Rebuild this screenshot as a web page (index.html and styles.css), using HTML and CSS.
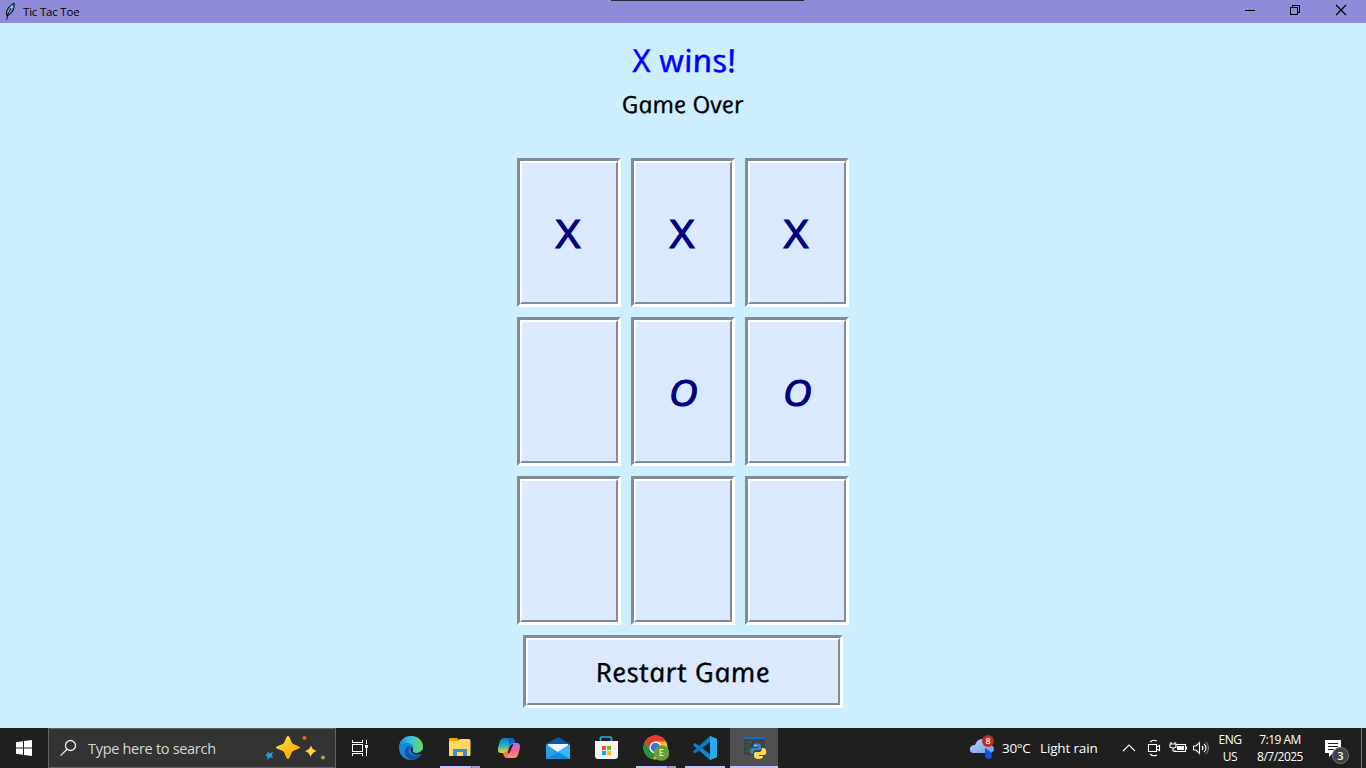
FILE: index.html
```html
<!DOCTYPE html>
<html lang="en">
<head>
<meta charset="utf-8">
<title>Tic Tac Toe</title>
<link rel="stylesheet" href="styles.css">
</head>
<body>
<header class="titlebar">
  <svg class="feather" width="12" height="18" viewBox="0 0 12 18"><path d="M3 14C1 8 5 4 10 1C11 7 8 12 3 14Z" fill="#4777ad" stroke="#080a12"/><path d="M4 11L8.500 4" stroke="#b4d8ff" stroke-width="1.800"/><path d="M2.700 17.500L4 12L7 6" fill="none" stroke="#080a12"/></svg>
  <h1 class="window-title">Tic Tac Toe</h1>
  <i class="snap-line"></i>
  <svg class="window-controls" width="138" height="23" viewBox="0 0 138 23" fill="none" stroke="#000" shape-rendering="crispEdges"><path d="M17 10.5H27M62.5 7.5H69.5V14.5H62.5ZM64.5 7V5.5H71.5V12.5H70"/><path d="M108 5L118 15M118 5L108 15" shape-rendering="auto" stroke-width="1.2"/></svg>
</header>
<main class="game">
  <p class="status"><span class="comic win-text">X wins!</span></p>
  <p class="substatus"><span class="comic over-text">Game Over</span></p>
  <div class="board">
    <button class="cell"><span class="mark-x">X</span></button><button class="cell"><span class="mark-x">X</span></button><button class="cell"><span class="mark-x">X</span></button>
    <button class="cell"></button><button class="cell"><span class="mark-o">O</span></button><button class="cell"><span class="mark-o">O</span></button>
    <button class="cell"></button><button class="cell"></button><button class="cell"></button>
  </div>
  <button class="cell restart"><span class="comic restart-text">Restart Game</span></button>
</main>
<footer class="taskbar">
  <div class="start"><svg width="16" height="16" viewBox="0 0 16 16" fill="#fff"><path d="M0 2.2L7 1.2V7.5H0ZM8 1L16 0V7.5H8ZM0 8.5H7V14.8L0 13.8ZM8 8.5H16V16L8 15Z"/></svg></div>
  <div class="search">
    <svg width="18" height="18" viewBox="0 0 18 18" fill="none" stroke="#ededed" stroke-width="1.3"><circle cx="10.500" cy="6.500" r="5"/><path d="M7 10.2L.6 16.6"/></svg>
    <span class="search-text">Type here to search</span>
    <svg class="sparkles" width="64" height="26" viewBox="0 0 64 26"><defs><linearGradient id="gold" x2="1" y2="1"><stop stop-color="#ffe45a"/><stop offset=".6" stop-color="#fdb813"/><stop offset="1" stop-color="#e89b19"/></linearGradient></defs><path d="M24 1C26 1 27 7 28.5 8.500C30 10 36 11 36 12.500C36 14 30 15 28.500 16.500C27 18 26 24 24 24C22 24 21 18 19.500 16.500C18 15 12 14 12 12.500C12 11 18 10 19.500 8.500C21 7 22 1 24 1Z" fill="url(#gold)"/><path d="M47 10.5Q48 14.5 52.5 16Q48 17.5 46.5 22Q45.5 17.5 41 16Q46 14.5 47 10.5Z" fill="#ffd33e"/><path d="M3 16.500L5.500 18.300L9 17L7.800 20L9 23L6 22.300L3.500 25L3.500 21.600L.5 20L3.300 19.200Z" fill="#1ba4ec"/><circle cx="40.5" cy="3" r="2" fill="#e86227"/><circle cx="59" cy="22.5" r="2" fill="#83bd3d"/></svg>
  </div>
  <div class="task-view"><svg width="18" height="18" viewBox="0 0 18 18" fill="none" stroke="#fff" shape-rendering="crispEdges"><path d="M1.5 1V3.5H11.5V1M1.5 5.5H11.5V12.5H1.5ZM1.5 17V14.5H11.5V17M15.5 1V5M15.5 9V17"/><path d="M14 5.5H17V8.5H14Z" fill="#fff" stroke="none"/></svg></div>
  <nav class="apps">
    <div class="app"><svg width="26" height="26" viewBox="0 0 26 26"><defs><linearGradient id="edgeTop"><stop stop-color="#168ed7"/><stop offset=".45" stop-color="#35c2dd"/><stop offset="1" stop-color="#69df55"/></linearGradient></defs><circle cx="13" cy="13" r="12" fill="#1687dc"/><path d="M1.2 11C2 4 8 1 13 1C20 1 25 6 25 11.5C25 16 22 18 18.5 18C15 18 14 16.5 15 15C17 11 13 8 9 8C5 8 2.5 9 1.2 11Z" fill="url(#edgeTop)"/><path d="M15 15C14 16.500 15.500 18 18.500 18Q22 18 24.500 14.500L26 19L23 19Q17 21 14 18Q12 16 13 12Q15 13 15 15Z" fill="#1f1f20"/><path d="M8 13C5 18 8 24 14 25C18 25 21 23 23 19.500C17 22 12 20 11 17C10 15 11 13 13 12C11 10.500 9 11 8 13Z" fill="#1455a6"/></svg></div>
    <div class="app open stacked"><svg width="24" height="22" viewBox="0 0 24 22"><path d="M1 2Q1 1 2 1H9L11 3H22V18H1Z" fill="#e8a900"/><path d="M1 4H10L12 2H21Q22.5 2 22.5 4V18Q22.5 19 21 19H1Z" fill="#ffd763"/><path d="M5 19V12H19V19H15V15H9V19Z" fill="#3c8ed6"/></svg></div>
    <div class="app"><svg width="24" height="22" viewBox="0 0 24 22"><defs><linearGradient id="copA" x2="0" y2="1"><stop stop-color="#0a7acc"/><stop offset=".5" stop-color="#24b5be"/><stop offset="1" stop-color="#ffd12b"/></linearGradient><linearGradient id="copB" x2="0" y2="1"><stop stop-color="#b56bee"/><stop offset=".5" stop-color="#f36399"/><stop offset="1" stop-color="#ff9a55"/></linearGradient></defs><path d="M7 1H15Q17 1 18 5L18.5 7H15Q13 7 12 10L10.5 14Q9.5 16 7 16H4Q0 16 1.2 10L3 4Q4 1 7 1Z" fill="url(#copA)"/><path d="M13 1H15Q17 1 18 5L18.5 7H15Q13 7 12.5 8L11.5 4Q11 1 9 1Z" fill="#1760cc"/><path d="M17 6H20Q24 6 22.7 12L21 18Q20 21 17 21H10Q7 21 6 16H7Q10 16 11 13L13 8Q14 6 17 6Z" fill="url(#copB)"/><path d="M6 16H7Q10 16 11 13L12 10L11 18Q10.5 21 9 20Q7 19 6 16Z" fill="#ff7550"/><path d="M16.500 7L13 15Q12.300 16.500 10.500 16.500L13 9Q14 7 16.500 7Z" fill="#202021"/></svg></div>
    <div class="app"><svg width="24" height="24" viewBox="0 0 24 24"><path d="M0 8L12 1L24 8V16H0Z" fill="#075ba8"/><path d="M2 8H22V14L12 20L2 14Z" fill="#f2f4f8"/><path d="M0 8L13 17L0 23Z" fill="#2b9fe5"/><path d="M24 8L0 23H24Z" fill="#35b9f2"/><path d="M12 16L24 23H0Z" fill="#168bdc"/></svg></div>
    <div class="app store"><svg width="24" height="24" viewBox="0 0 24 24"><path d="M6.5 6V2Q6.5 1 7.5 1H16.5Q17.5 1 17.5 2V6" fill="none" stroke="#26addc" stroke-width="1.7"/><path d="M1 5H24V20Q24 23 21 23H4Q1 23 1 20Z" fill="#f4f4f4"/><path d="M8 10H12V14H8Z" fill="#f15125"/><path d="M13 10H17V14H13Z" fill="#80bb03"/><path d="M8 15H12V19H8Z" fill="#05a6f0"/><path d="M13 15H17V19H13Z" fill="#ffb900"/></svg></div>
    <div class="app open stacked"><svg width="26" height="26" viewBox="0 0 26 26"><circle cx="12.5" cy="12.5" r="12" fill="#fbc116"/><path d="M2 6.5A12 12 0 0 1 23 6.5H12.5L7.2 15.5Z" fill="#e33b2e"/><path d="M2 6.5L7.2 15.5L13 18.5L10 24.2A12 12 0 0 1 2 6.5Z" fill="#229342"/><circle cx="12.5" cy="12.5" r="6" fill="#fff"/><circle cx="12.5" cy="12.5" r="4.7" fill="#3577e5"/><circle cx="18.5" cy="18" r="7.8" fill="#689f38"/><text x="18.5" y="21.2" class="avatar-letter">E</text></svg></div>
    <div class="app open"><svg width="26" height="26" viewBox="0 0 26 26"><path d="M18 1L25 4V22L18 25L1 10L3 8L18 19Z" fill="#1684cd"/><path d="M18 1V7L3 18.5L1 16.5Z" fill="#087cc3"/><path d="M18 1L25 4V22L18 25Z" fill="#2aa9ee"/></svg></div>
    <div class="app open active"><svg width="26" height="26" viewBox="0 0 26 26"><path d="M2 2H23V20H2Z" fill="#3d4449"/><path d="M2 2H23V4H2Z" fill="#0873c9"/><path d="M4 7H10M4 10H8M4 13H9M4 16H8" stroke="#38613c" stroke-width="1.5"/><path d="M12 9Q16 7 19 10V15H13Q11 16 11 19H9Q7 14 10 13H16V12H11Q11 10 12 9Z" fill="#3b83bd"/><path d="M20 13H22Q25 14 24 19Q23 20 21 20H17V21H21Q21 24 17 24Q12 24 12 21V19Q12 17 14 17H18Q20 16 20 13Z" fill="#ffdc54"/><circle cx="13.5" cy="10.5" r=".8" fill="#fff"/><circle cx="19.5" cy="22" r=".7" fill="#fff"/></svg></div>
  </nav>
  <div class="weather">
    <svg width="26" height="26" viewBox="0 0 26 26"><defs><linearGradient id="cloud" x2="1" y2="1"><stop stop-color="#bdd9fe"/><stop offset="1" stop-color="#659bec"/></linearGradient></defs><path d="M5 18Q0 18 1 13Q2 10 6 10Q8 4 13 4Q18 4 20 10Q25 10 25 14Q25 18 20 18Z" fill="url(#cloud)"/><path d="M16 13Q23 17 23 21Q23 24 19.5 24Q16 24 16 20Z" fill="#174fe0"/><circle cx="19" cy="6" r="6" fill="#c42b1c"/><text x="19" y="9.3" class="badge-number">8</text></svg>
    <span class="temperature">30°C</span><span class="condition">Light rain</span>
  </div>
  <svg class="tray" width="88" height="24" viewBox="0 0 88 24" fill="none" stroke="#fff" stroke-width="1.1">
    <path d="M1 15L7 9L13 15"/>
    <path d="M28 6Q31 3 35 5M28 18Q31 21 35 19M26.5 8.5H34.5V15.5H26.5ZM34.5 11L37.5 9.5V14.5L34.5 13"/>
    <path d="M54 8.5H63.5V15.5H52M64.5 10.5V13.5"/><path d="M55 10H62V14H55Z" fill="#fff" stroke="none"/><path d="M49 6V8M53 6V8M48 8H54V11Q51 13 48 11ZM51 12V15H54"/>
    <path d="M71.5 10H74L77.5 6.5V17.5L74 14H71.5ZM80 10Q82 12 80 14M82 8Q86 12 82 16"/><path d="M84 6Q89 12 84 18" stroke="#858585"/>
  </svg>
  <div class="language"><span>ENG</span><span>US</span></div>
  <div class="clock"><span>7:19 AM</span><span>8/7/2025</span></div>
  <svg class="notifications" width="26" height="26" viewBox="0 0 26 26"><path d="M1 1H17V14H9L5 18V14H1Z" fill="#fff"/><path d="M4 4.5H14M4 7.5H14M4 10.5H10" stroke="#202020"/><circle cx="16.5" cy="16.5" r="8" fill="#414143" stroke="#77777a"/><text x="16.5" y="20.6" class="notification-number">3</text></svg>
  <i class="desktop-line"></i>
</footer>
</body>
</html>
```
FILE: styles.css
```css
* { box-sizing: border-box; }
body { margin: 0; width: 1366px; height: 768px; overflow: hidden; display: flex; flex-direction: column; background: #cef; font-family: "Segoe UI", "Open Sans", "Noto Sans", sans-serif; }
svg { display: block; flex: none; }
.titlebar { position: relative; display: flex; height: 23px; background: #8f8bd8; flex: none; }
.feather { margin: 2px 0 0 4px; }
.window-title { margin: 0 0 0 7px; font-size: 11.5px; line-height: 23px; font-weight: 400; letter-spacing: -.2px; }
.snap-line { position: absolute; left: 611px; top: 0; width: 193px; height: 1px; background: #29293b; }
.window-controls { margin-left: auto; }
.game { flex: 1; display: flex; flex-direction: column; align-items: center; min-height: 0; }
.status, .substatus { margin: 0; text-align: center; white-space: nowrap; }
.status { height: 54px; padding-top: 15px; line-height: 44px; color: #00f; }
.substatus { height: 81px; padding-top: 9px; line-height: 36px; color: #000; }
.comic { display: inline-block; font-family: "Comic Sans MS", "Open Sans", sans-serif; font-style: italic; transform: skewX(11deg); white-space: nowrap; }
.win-text { font-size: 31.5px; -webkit-text-stroke: .4px; transform: scaleX(1.09) skewX(11deg); }
.over-text { font-size: 23.5px; -webkit-text-stroke: .3px; transform: translateX(-1px) scaleX(1.05) skewX(11deg); }
.board { display: grid; grid-template-columns: repeat(3, 104px); grid-auto-rows: 149px; gap: 10px; }
.cell { position: relative; display: flex; align-items: center; justify-content: center; padding: 0; background: #dbe9ff; border: 3px solid; border-color: #838b99 #fff #fff #838b99; color: #000080; font-family: "Comic Sans MS", "Open Sans", sans-serif; }
.cell::after { content: ""; position: absolute; inset: 0; border: 2px solid; border-color: #fff #838b99 #838b99 #fff; }
.mark-x { font: 400 38px "Comic Sans MS", "Open Sans", sans-serif; -webkit-text-stroke: 1.2px; transform: translateX(-1px) scaleX(1.12); }
.mark-o { font: italic 400 37px "Comic Sans MS", "Open Sans", sans-serif; -webkit-text-stroke: 1.2px; transform: scaleX(1.07); }
.restart { width: 320px; height: 73px; margin-top: 10px; color: #000; }
.restart-text { font-size: 26.5px; font-weight: 500; letter-spacing: .5px; -webkit-text-stroke: .4px; transform: translateX(-1px) scaleX(1.06) skewX(11deg); }
.taskbar { display: flex; height: 40px; flex: none; background: #1f1f20; color: #fff; }
.start { width: 48px; display: grid; place-items: center; }
.search { display: flex; align-items: center; width: 288px; border: 1px solid #626262; background: #333; padding-left: 11px; }
.search-text { margin-left: 10px; width: 140px; color: #d6d6d6; font-size: 14.5px; letter-spacing: -.3px; white-space: nowrap; }
.sparkles { margin-left: 36px; }
.task-view { width: 48px; display: grid; place-items: center; }
.apps { display: flex; gap: 1px; margin-left: 3px; width: 392px; }
.app { position: relative; width: 48px; display: grid; place-items: center; }
.store { padding-right: 2px; }
.open::after { content: ""; position: absolute; left: 4px; bottom: 0; width: 40px; height: 2px; background: #c7bff9; }
.stacked::after { background: linear-gradient(90deg, #c7bff9 31px, #75709a 31px 32px, #a59bc9 32px); }
.active { background: #505052; padding-left: 2px; }
.active::after { left: 0; width: 48px; }
.avatar-letter { fill: #fff; font: 9px "Open Sans", sans-serif; text-anchor: middle; }
.weather { display: flex; align-items: center; margin-left: 190px; width: 153px; font-size: 13.5px; white-space: nowrap; }
.temperature { width: 38px; margin-left: 7px; letter-spacing: -.3px; }
.condition { letter-spacing: -.15px; }
.badge-number { fill: #fff; font: 600 9px "Open Sans", sans-serif; text-anchor: middle; }
.tray { margin-top: 8px; }
.language, .clock { display: flex; flex-direction: column; align-items: center; padding-top: 3px; font-size: 12px; line-height: 17px; letter-spacing: -.4px; white-space: nowrap; }
.language { width: 30px; margin-left: 5px; }
.clock { width: 54px; margin-left: 8px; letter-spacing: -.5px; }
.notifications { margin: 11px 0 0 17px; }
.notification-number { fill: #fff; font: 600 11px "Open Sans", sans-serif; text-anchor: middle; }
.desktop-line { width: 1px; background: #78787a; margin-left: auto; margin-right: 4px; }
```
